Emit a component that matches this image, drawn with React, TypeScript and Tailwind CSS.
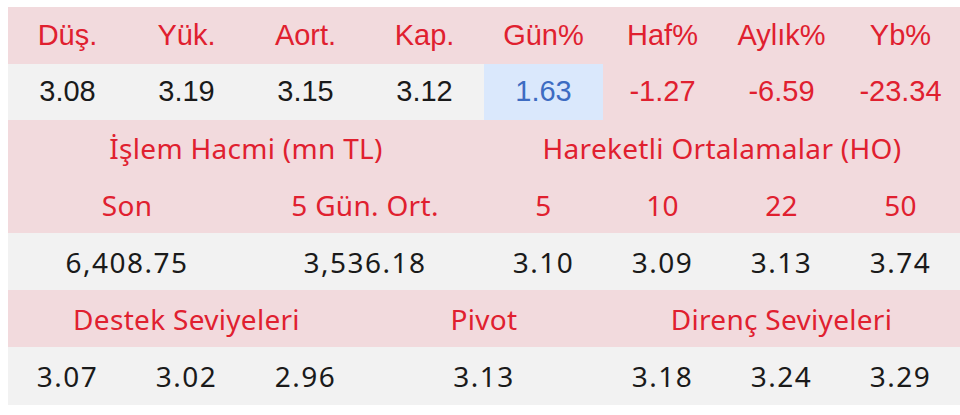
const PINK = "bg-[#f2dadd]";
const GRAY = "bg-[#f2f2f2]";

const topHeads = ["Düş.", "Yük.", "Aort.", "Kap.", "Gün%", "Haf%", "Aylık%", "Yb%"];

interface TopCell {
  value: string;
  tone: "plain" | "up" | "down";
}

const topValues: TopCell[] = [
  { value: "3.08", tone: "plain" },
  { value: "3.19", tone: "plain" },
  { value: "3.15", tone: "plain" },
  { value: "3.12", tone: "plain" },
  { value: "1.63", tone: "up" },
  { value: "-1.27", tone: "down" },
  { value: "-6.59", tone: "down" },
  { value: "-23.34", tone: "down" },
];

const maLabels = ["5", "10", "22", "50"];
const maValues = ["3.10", "3.09", "3.13", "3.74"];

function cellClass(tone: TopCell["tone"]) {
  if (tone === "up") return "bg-[#dae8fc] text-[#3d6cc2]";
  if (tone === "down") return "bg-[#f2dadd] text-[#e0202f]";
  return "bg-[#f2f2f2] text-[#1a1a1a]";
}

const LABEL = "font-['Noto_Sans',sans-serif] text-[28px] tracking-[0.3px] text-[#e0202f]";
const NUM = "font-['Noto_Sans',sans-serif] text-[28px] tracking-[1.5px] text-[#1a1a1a]";

export default function App() {
  return (
    <div className="h-[415px] w-[960px] overflow-hidden bg-white pl-2 pt-[7px]">
      <table className="w-[952px] table-fixed border-collapse text-center">
        <colgroup>
          {topHeads.map((h) => (
            <col key={h} className="w-[119px]" />
          ))}
        </colgroup>
        <tbody>
          {/* price summary */}
          <tr className={`h-[57px] ${PINK} font-['Liberation_Sans',Arial,sans-serif] text-[29px] text-[#e0202f]`}>
            {topHeads.map((h) => (
              <td key={h} className="p-0">
                {h}
              </td>
            ))}
          </tr>
          <tr className="h-[56px] font-['Liberation_Sans',Arial,sans-serif] text-[29px]">
            {topValues.map((c, i) => (
              <td key={i} className={`p-0 ${cellClass(c.tone)}`}>
                {c.value}
              </td>
            ))}
          </tr>

          {/* volume + moving averages */}
          <tr className={`h-[56px] ${PINK} ${LABEL}`}>
            <td colSpan={4} className="p-0">
              İşlem Hacmi (mn TL)
            </td>
            <td colSpan={4} className="p-0">
              Hareketli Ortalamalar (HO)
            </td>
          </tr>
          <tr className={`h-[57px] ${PINK} ${LABEL}`}>
            <td colSpan={2} className="p-0">
              Son
            </td>
            <td colSpan={2} className="p-0">
              5 Gün. Ort.
            </td>
            {maLabels.map((l) => (
              <td key={l} className="p-0">
                {l}
              </td>
            ))}
          </tr>
          <tr className={`h-[57px] ${GRAY} ${NUM}`}>
            <td colSpan={2} className="p-0">
              6,408.75
            </td>
            <td colSpan={2} className="p-0">
              3,536.18
            </td>
            {maValues.map((v, i) => (
              <td key={i} className="p-0">
                {v}
              </td>
            ))}
          </tr>

          {/* support / pivot / resistance */}
          <tr className={`h-[57px] ${PINK} ${LABEL}`}>
            <td colSpan={3} className="p-0">
              Destek Seviyeleri
            </td>
            <td colSpan={2} className="p-0">
              Pivot
            </td>
            <td colSpan={3} className="p-0">
              Direnç Seviyeleri
            </td>
          </tr>
          <tr className={`h-[58px] ${GRAY} ${NUM}`}>
            <td className="p-0">3.07</td>
            <td className="p-0">3.02</td>
            <td className="p-0">2.96</td>
            <td colSpan={2} className="p-0">
              3.13
            </td>
            <td className="p-0">3.18</td>
            <td className="p-0">3.24</td>
            <td className="p-0">3.29</td>
          </tr>
        </tbody>
      </table>
    </div>
  );
}
